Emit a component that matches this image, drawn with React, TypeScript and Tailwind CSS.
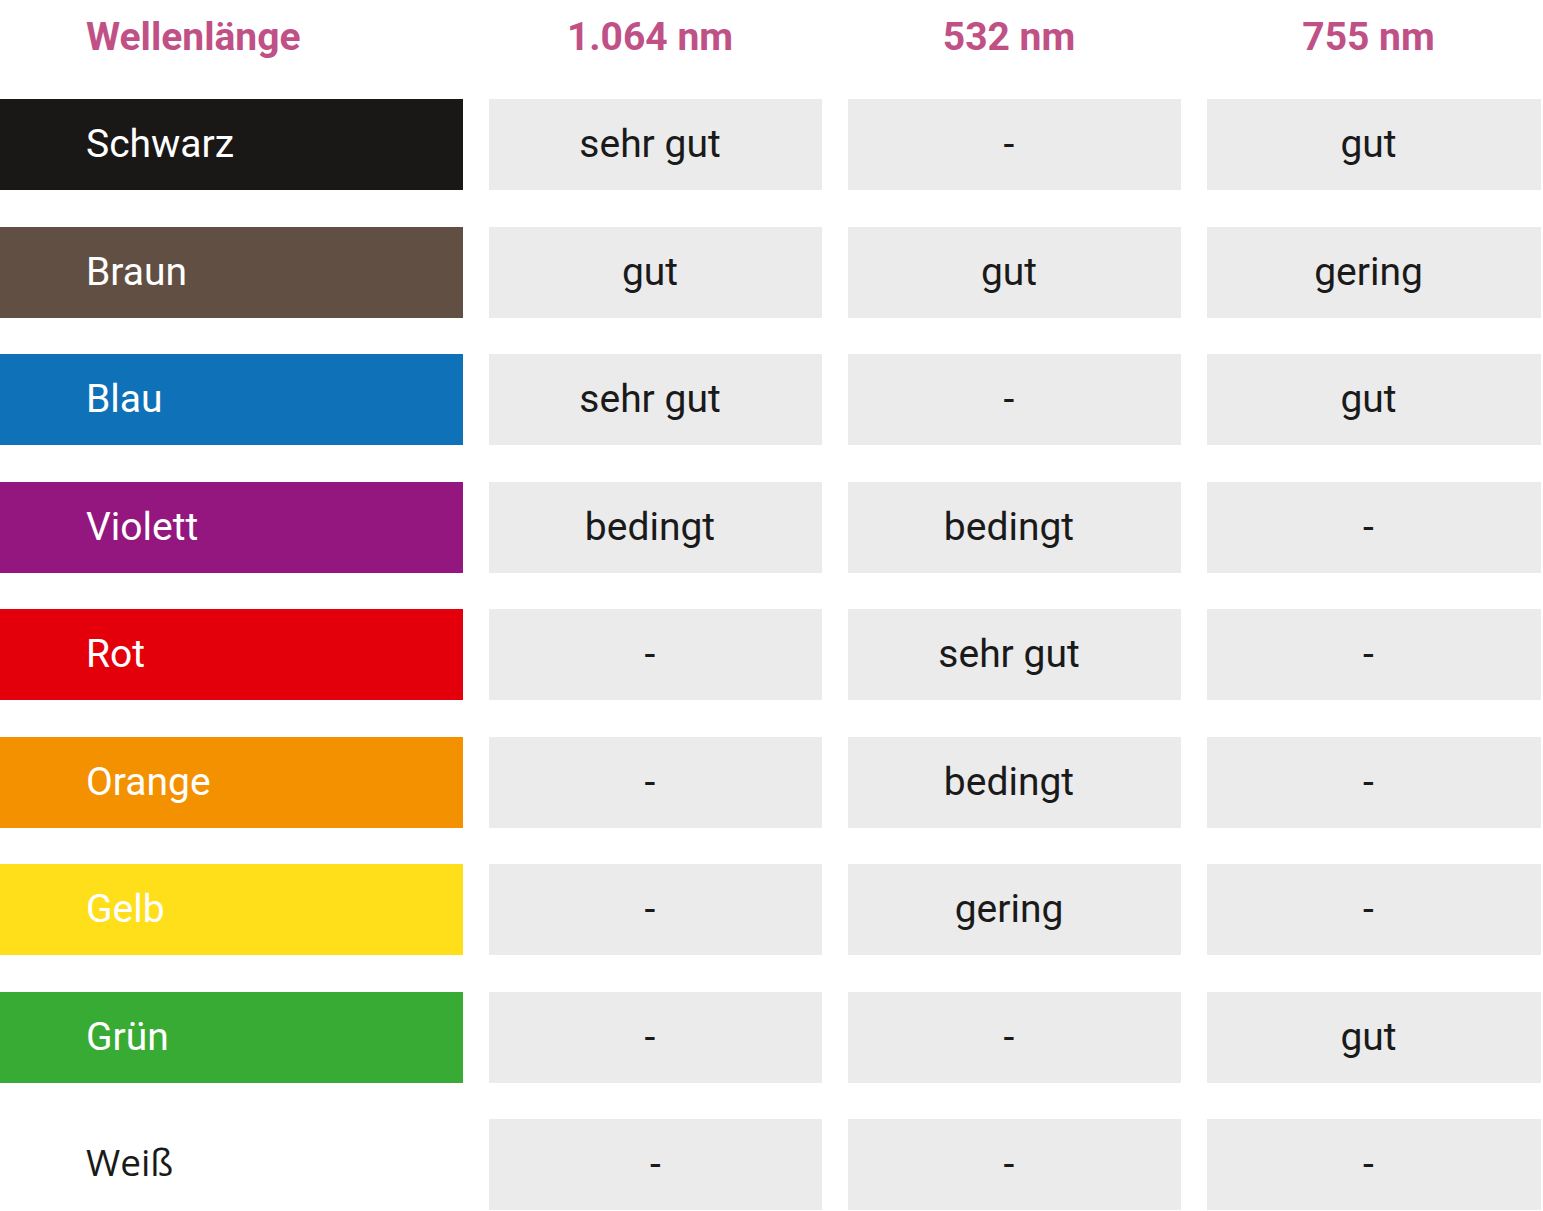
import React from "react";

type Row = { name: string; bg: string; text: string; values: [string, string, string] };

const rows: Row[] = [
  { name: "Schwarz", bg: "bg-[#1a1817]", text: "text-white", values: ["sehr gut", "-", "gut"] },
  { name: "Braun", bg: "bg-[#624f44]", text: "text-white", values: ["gut", "gut", "gering"] },
  { name: "Blau", bg: "bg-[#0f71b8]", text: "text-white", values: ["sehr gut", "-", "gut"] },
  { name: "Violett", bg: "bg-[#93177e]", text: "text-white", values: ["bedingt", "bedingt", "-"] },
  { name: "Rot", bg: "bg-[#e3000b]", text: "text-white", values: ["-", "sehr gut", "-"] },
  { name: "Orange", bg: "bg-[#f39100]", text: "text-white", values: ["-", "bedingt", "-"] },
  { name: "Gelb", bg: "bg-[#ffde1a]", text: "text-white", values: ["-", "gering", "-"] },
  { name: "Grün", bg: "bg-[#38ab35]", text: "text-white", values: ["-", "-", "gut"] },
  { name: "Weiß", bg: "bg-white", text: "text-[#1a1a1a]", values: ["-", "-", "-"] },
];

const headers = ["1.064 nm", "532 nm", "755 nm"];

const App = () => {
  return (
    <div className="w-[1543px] bg-white font-['Roboto',sans-serif]">
      <div className="grid grid-cols-[463px_333px_333px_334px] gap-x-[26px] h-[99px] pt-[18px]">
        <div className="pl-[86px] text-[39px] leading-none font-bold text-[#c05186]">
          Wellenlänge
        </div>
        {headers.map((h) => (
          <div
            key={h}
            className="text-center pr-[11px] text-[39px] leading-none font-bold text-[#c05186]"
          >
            {h}
          </div>
        ))}
      </div>
      <div className="flex flex-col gap-[36.5px]">
        {rows.map((row) => {
          const last = row.name === "Weiß";
          return (
            <div
              key={row.name}
              className="grid grid-cols-[463px_333px_333px_334px] gap-x-[26px] h-[91px]"
            >
              <div className={`${row.bg} ${row.text} flex items-center pl-[86px] text-[39px] leading-none`}>
                <span className={last ? "font-['Open_Sans',sans-serif] text-[37px] pb-[6px]" : ""}>
                  {row.name}
                </span>
              </div>
              {row.values.map((v, i) => (
                <div
                  key={i}
                  className={`bg-[#ebebeb] flex items-center justify-center text-[39px] leading-none text-[#1a1a1a] ${
                    last && i === 0 ? "pr-0" : "pr-[11px]"
                  }`}
                >
                  {v}
                </div>
              ))}
            </div>
          );
        })}
      </div>
    </div>
  );
};

export default App;
